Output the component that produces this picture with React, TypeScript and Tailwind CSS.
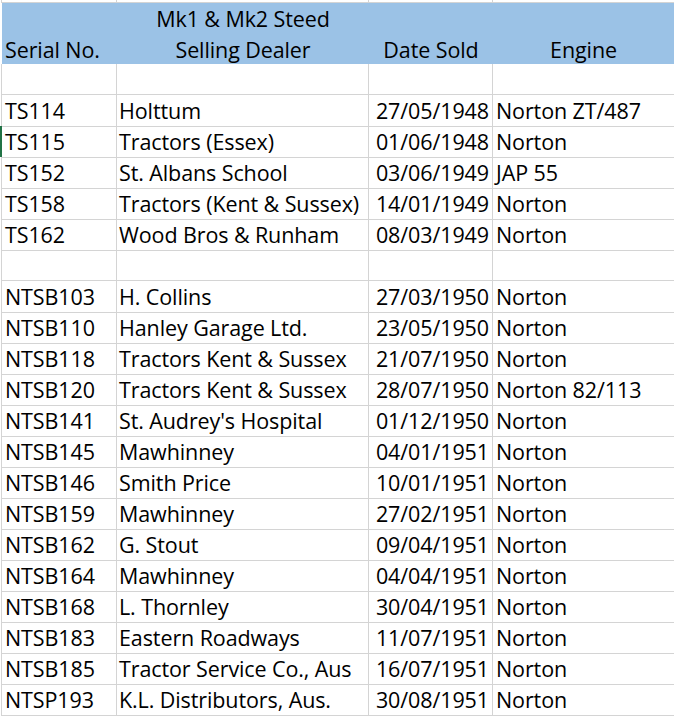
import React from 'react';

type Row = [string, string, string, string] | null;

const rows: Row[] = [
  null,
  ['TS114', 'Holttum', '27/05/1948', 'Norton ZT/487'],
  ['TS115', 'Tractors (Essex)', '01/06/1948', 'Norton'],
  ['TS152', 'St. Albans School', '03/06/1949', 'JAP 55'],
  ['TS158', 'Tractors (Kent & Sussex)', '14/01/1949', 'Norton'],
  ['TS162', 'Wood Bros & Runham', '08/03/1949', 'Norton'],
  null,
  ['NTSB103', 'H. Collins', '27/03/1950', 'Norton'],
  ['NTSB110', 'Hanley Garage Ltd.', '23/05/1950', 'Norton'],
  ['NTSB118', 'Tractors Kent & Sussex', '21/07/1950', 'Norton'],
  ['NTSB120', 'Tractors Kent & Sussex', '28/07/1950', 'Norton 82/113'],
  ['NTSB141', "St. Audrey's Hospital", '01/12/1950', 'Norton'],
  ['NTSB145', 'Mawhinney', '04/01/1951', 'Norton'],
  ['NTSB146', 'Smith Price', '10/01/1951', 'Norton'],
  ['NTSB159', 'Mawhinney', '27/02/1951', 'Norton'],
  ['NTSB162', 'G. Stout', '09/04/1951', 'Norton'],
  ['NTSB164', 'Mawhinney', '04/04/1951', 'Norton'],
  ['NTSB168', 'L. Thornley', '30/04/1951', 'Norton'],
  ['NTSB183', 'Eastern Roadways', '11/07/1951', 'Norton'],
  ['NTSB185', 'Tractor Service Co., Aus', '16/07/1951', 'Norton'],
  ['NTSP193', 'K.L. Distributors, Aus.', '30/08/1951', 'Norton'],
];

function DataRow({ row, active }: { row: Row; active?: boolean }) {
  const [serial, dealer, date, engine] = row ?? ['', '', '', ''];
  return (
    <div className="relative ml-px grid h-[31px] grid-cols-[116px_252px_124px_1fr] leading-[31px]">
      {active && <div className="absolute -left-px top-0 h-[31px] w-[2px] bg-[#217346]" />}
      <div className="overflow-hidden whitespace-nowrap border-x border-b border-[#d4d4d4] pl-[3px]">{serial}</div>
      <div className="whitespace-nowrap border-r border-b border-[#d4d4d4] pl-[2px]">{dealer}</div>
      <div className="whitespace-nowrap border-r border-b border-[#d4d4d4] pr-[3px] text-right">{date}</div>
      <div className="whitespace-nowrap border-b border-[#d4d4d4] pl-[3px]">{engine}</div>
    </div>
  );
}

export default function App() {
  return (
    <div className="h-[717px] w-[674px] overflow-hidden bg-white font-['Open_Sans',sans-serif] text-[21.5px] tracking-[-0.1px] text-black">
      {/* tail of the row above */}
      <div className="ml-px grid h-[3px] grid-cols-[116px_252px_124px_1fr]">
        <div className="border-x border-b border-[#d4d4d4]" />
        <div className="border-r border-b border-[#d4d4d4]" />
        <div className="border-r border-b border-[#d4d4d4]" />
        <div className="border-b border-[#d4d4d4]" />
      </div>

      <div className="ml-[2px] grid h-[61px] grid-cols-[115px_252px_124px_1fr] bg-[#9bc2e6] leading-[31px]">
        <div className="whitespace-nowrap pl-[3px] pt-[31px]">Serial No.</div>
        <div className="whitespace-nowrap text-center">
          <div>Mk1 &amp; Mk2 Steed</div>
          <div>Selling Dealer</div>
        </div>
        <div className="whitespace-nowrap pt-[31px] text-center">Date Sold</div>
        <div className="whitespace-nowrap pt-[31px] text-center">Engine</div>
      </div>

      {rows.map((r, i) => (
        <DataRow key={i} row={r} active={i === 2} />
      ))}
    </div>
  );
}
